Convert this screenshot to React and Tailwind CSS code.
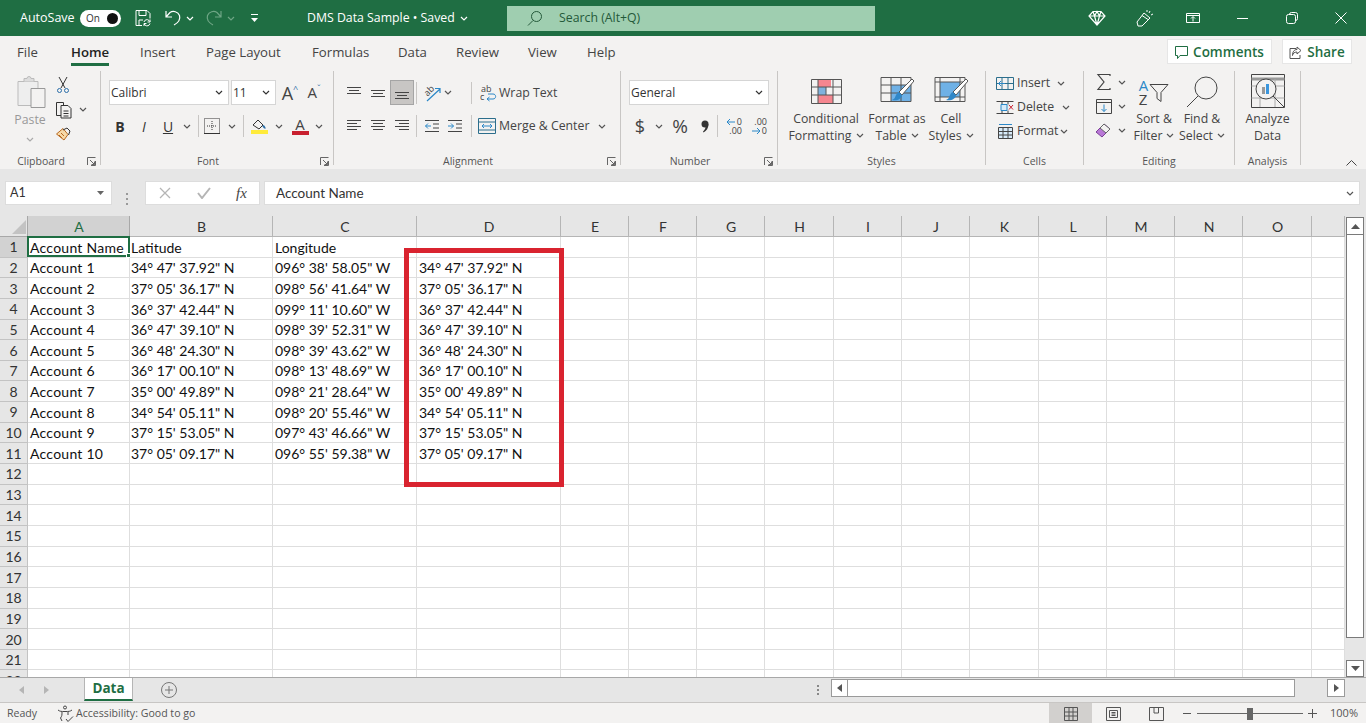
// Excel window: title bar, ribbon, formula bar, sheet grid and status bar
import { Fragment } from 'react'

const UI = { fontFamily: '"Open Sans", "Noto Sans", sans-serif' }
const SHEET = { fontFamily: 'Lato, "Noto Sans", sans-serif' }

const COLS = ['A', 'B', 'C', 'D', 'E', 'F', 'G', 'H', 'I', 'J', 'K', 'L', 'M', 'N', 'O', '']
const LAT = [`34° 47' 37.92" N`, `37° 05' 36.17" N`, `36° 37' 42.44" N`, `36° 47' 39.10" N`, `36° 48' 24.30" N`, `36° 17' 00.10" N`, `35° 00' 49.89" N`, `34° 54' 05.11" N`, `37° 15' 53.05" N`, `37° 05' 09.17" N`]
const LNG = [`096° 38' 58.05" W`, `098° 56' 41.64" W`, `099° 11' 10.60" W`, `098° 39' 52.31" W`, `098° 39' 43.62" W`, `098° 13' 48.69" W`, `098° 21' 28.64" W`, `098° 20' 55.46" W`, `097° 43' 46.66" W`, `096° 55' 59.38" W`]

const rows = [['Account Name', 'Latitude', 'Longitude', '']]
LAT.forEach((lat, i) => rows.push([`Account ${i + 1}`, lat, LNG[i], lat]))
while (rows.length < 22) rows.push(['', '', '', ''])

const Chev = ({ color = '#555' }) => (
  <svg width="8" height="5" viewBox="0 0 8 5" fill="none" stroke={color} strokeWidth="1.2" className="shrink-0"><path d="M1 1l3 3 3-3" /></svg>
)

const Ic = ({ w = 18, h = 18, children, sw = 1, color = '#444' }) => (
  <svg width={w} height={h} viewBox={`0 0 ${w} ${h}`} fill="none" stroke={color} strokeWidth={sw} className="shrink-0">{children}</svg>
)

const Slot = ({ className = '', children }) => (
  <div className={`flex items-center justify-center shrink-0 h-full ${className}`}>{children}</div>
)

const Sep = () => <div className="w-px h-[22px] bg-[#c8c6c4] shrink-0" />

const Launcher = () => (
  <svg width="9" height="9" viewBox="0 0 9 9" fill="none" stroke="#666"><path d="M.5 8V.5H8.500M8.500 4v4.500H4M3 3l4.500 4.500M7.500 4.500v3h-3" /></svg>
)

const Group = ({ label, launcher, className = '', children }) => (
  <div className={`flex flex-col shrink-0 h-[94px] border-r border-[#c8c6c4] ${className}`}>
    <div className="h-[77px] min-h-0 flex-1">{children}</div>
    <div className="h-[17px] pt-[9px] flex items-center text-[10.500px] text-[#555]">
      <div className="flex-1 text-center leading-none">{label}</div>
      {launcher && <div className="w-[18px] flex justify-center"><Launcher /></div>}
    </div>
  </div>
)

const Combo = ({ className = '', children }) => (
  <div className={`h-[25px] bg-white border border-[#d5d5d5] flex items-center justify-between pl-[1px] pr-[5px] text-[12px] text-[#333] shrink-0 ${className}`}>
    <span className="mt-[1px]">{children}</span><Chev color="#333" />
  </div>
)

const Lines = ({ pattern }) => (
  <Ic w={16} h={14}>
    {pattern.map(([y, x1, x2], i) => <path key={i} d={`M${x1} ${y}H${x2}`} />)}
  </Ic>
)

const BigTool = ({ className = '', icon, l1, l2, chev = true }) => (
  <div className={`flex flex-col items-center shrink-0 ${className}`}>
    <div className="h-[33px] mt-[4px] flex items-center justify-center">{icon}</div>
    <div className="mt-[2px] text-[12.300px] leading-[17px] text-[#444] text-center whitespace-nowrap">{l1}</div>
    <div className="text-[12.300px] leading-[17px] text-[#444] text-center whitespace-nowrap flex items-center gap-[4px]">{l2}{chev && <Chev />}</div>
  </div>
)

const Brush = ({ x = 0, y = 0 }) => (
  <g transform={`translate(${x} ${y})`}>
    <path d="M32 2l2 2-12 14-3-3z" fill="#fff" stroke="#555" />
    <path d="M19 15l3 3c0 4-5 6-10 5 3-1 3-3 4-5 1-2 2-3 3-3z" fill="#2f87c8" stroke="none" />
  </g>
)

function TitleBar() {
  return (
    <div className="h-[36px] bg-[#1f6e43] flex items-center text-white text-[12.300px] shrink-0">
      <span className="ml-[20px] w-[60px] text-[12.500px]">AutoSave</span>
      <div className="w-[41px] h-[17px] bg-white rounded-full flex items-center justify-between pl-[6px] pr-[3px]">
        <span className="text-[10px] text-[#333] leading-none">On</span>
        <span className="w-[11px] h-[11px] rounded-full bg-[#111]" />
      </div>
      <Slot className="w-[44px]">
        <Ic w={18} h={18} color="#fff"><path d="M2 1.500h11l3 3v5M2 1.500v15h6M5 1.500v5h7v-5M5 16v-5h4" /><path d="M10 13a3 3 0 0 1 5-1.500l1 1M16 14.500a3 3 0 0 1-5 1.500l-1-1M16 10.500v2.500h-2.500M10 17v-2.500h2.500" /></Ic>
      </Slot>
      <Slot className="w-[24px] -ml-[4px]">
        <Ic w={18} h={18} color="#fff" sw={1.200}><path d="M2 2v6h6M2 8l4-4.500c3-2 8-1 9.500 3 1 3.500-1 7-5.500 9.500" /></Ic>
      </Slot>
      <Slot className="w-[10px]"><Chev color="#fff" /></Slot>
      <Slot className="w-[24px] ml-[7px]">
        <Ic w={18} h={18} color="#6ea585" sw={1.200}><path d="M16 2v6h-6M16 8l-4-4.500c-3-2-8-1-9.500 3-1 3.500 1 7 5.500 9.500" /></Ic>
      </Slot>
      <Slot className="w-[10px]"><Chev color="#6ea585" /></Slot>
      <Slot className="w-[18px] ml-[9px]">
        <svg width="9" height="9" viewBox="0 0 9 9" fill="#fff" stroke="#fff"><path d="M1 .5h7" /><path d="M1 4h7L4.500 8z" stroke="none" /></svg>
      </Slot>
      <span className="ml-[44px] w-[147px] whitespace-nowrap">DMS Data Sample • Saved</span>
      <Slot className="w-[20px]"><Chev color="#fff" /></Slot>
      <div className="ml-[33px] w-[368px] h-[25px] bg-[#9fceb0] flex items-center text-[#24593a]">
        <Slot className="w-[56px] -mr-[4px]">
          <Ic w={16} h={16} color="#24593a"><circle cx="9.500" cy="6.500" r="5" /><path d="M6 10.500L1 15.500" /></Ic>
        </Slot>
        <span>Search (Alt+Q)</span>
      </div>
      <div className="flex-1" />
      <Slot className="w-[49px]">
        <Ic w={18} h={16} color="#fff" sw={1.200}><path d="M5 1.500h8l4 4.500-8 9-8-9zM1 6h16M6.500 6L9 15l2.500-9M5 1.500L6.500 6 9 1.500 11.500 6l1.500-4.500" /></Ic>
      </Slot>
      <Slot className="w-[48px]">
        <Ic w={18} h={18} color="#fff"><path d="M1 13l7-9 6 5-8 8-4 0zM6 6.500l6 4M13 4l1-2M15 6l2-1M11 3l0-2" /></Ic>
      </Slot>
      <Slot className="w-[48px]">
        <Ic w={16} h={12} color="#fff"><path d="M1.500 1.500h13v9h-13zM1.500 3.500h13M8 9.500V5M6 6.500L8 4.500l2 2" /></Ic>
      </Slot>
      <Slot className="w-[50px]"><div className="w-[11px] h-px bg-white" /></Slot>
      <Slot className="w-[49px]">
        <Ic w={12} h={12} color="#fff"><path d="M3.500 2.500a2 2 0 0 1 2-2h4a2 2 0 0 1 2 2v4a2 2 0 0 1-2 2" /><rect x=".5" y="2.500" width="9" height="9" rx="2" /></Ic>
      </Slot>
      <Slot className="w-[50px]">
        <Ic w={12} h={12} color="#fff"><path d="M.5.5l11 11M11.500.5l-11 11" /></Ic>
      </Slot>
    </div>
  )
}

function TabRow() {
  const tabs = [['File', 'w-[71px] pl-[17px]'], ['Home', 'w-[69px]'], ['Insert', 'w-[66px]'], ['Page Layout', 'w-[106px]'], ['Formulas', 'w-[86px]'], ['Data', 'w-[58px]'], ['Review', 'w-[72px]'], ['View', 'w-[59px]'], ['Help', 'w-[50px]']]
  return (
    <div className="h-[34px] bg-[#f3f2f1] flex text-[13.200px] text-[#444] shrink-0">
      {tabs.map(([t, w]) => (
        <div key={t} className={`${w} shrink-0 flex flex-col pt-[6px]`}>
          <span className={t === 'Home' ? 'w-fit text-[#222] font-semibold leading-[20px] border-b-[3px] border-[#1f6e43] pb-[1px]' : 'leading-[20px]'}>{t}</span>
        </div>
      ))}
      <div className="flex-1" />
      <div className="mt-[3px] h-[25px] w-[105px] bg-white border border-[#e6e6e6] flex items-center justify-center gap-[5px] pt-[1px] text-[#1f6e43] font-semibold text-[13.500px]">
        <Ic w={13} h={13} color="#1f6e43"><path d="M.5.5h12v9H5l-2.500 3v-3h-2z" /></Ic>Comments
      </div>
      <div className="mt-[3px] ml-[10px] mr-[14px] h-[25px] w-[70px] bg-white border border-[#e6e6e6] flex items-center justify-center gap-[5px] pt-[1px] text-[#1f6e43] font-semibold text-[13.500px]">
        <Ic w={13} h={13} color="#555"><path d="M7 2.500H1v10h10V9M8 1l4 3.500L8 8V6C5 6 4 7.500 3.500 9.500 3.500 6 5 3.500 8 3.500z" /></Ic>Share
      </div>
    </div>
  )
}

function Clipboard() {
  return (
    <Group label="Clipboard" launcher className="w-[101px]">
      <div className="flex h-full">
        <div className="w-[55px] flex flex-col items-center pl-[5px] text-[12.300px] text-[#999]">
          <div className="mt-[5px] h-[33px]">
            <Ic w={31} h={33} color="#bbb"><path d="M3 5.500h20v24H3z" fill="#eee" /><path d="M9 5.500v-3h3a2 2 0 0 1 4 0h3v3" fill="#ddd" /><path d="M16 12.500h14v19H16z" fill="#f3f2f1" stroke="#999" /></Ic>
          </div>
          <span className="mt-[2px] leading-[17px]">Paste</span>
          <div className="mt-[9px]"><Chev color="#aaa" /></div>
        </div>
        <div className="flex flex-col pt-[2px]">
          <div className="h-[24px] flex items-center pl-[1px]">
            <Ic w={14} h={18} color="#333"><path d="M3 1l6 11M11 1L5 12" /><circle cx="3.500" cy="14.500" r="2" stroke="#2b6ea8" /><circle cx="10.500" cy="14.500" r="2" stroke="#2b6ea8" /></Ic>
          </div>
          <div className="h-[25px] flex items-center gap-[6px]">
            <Ic w={18} h={18} color="#333"><path d="M1.500 1.500h7v13h-7z" /><path d="M6 4.500h7l3 3v9.500H6z" fill="#f3f2f1" /><path d="M8.500 10h5M8.500 12.500h5M8.500 15h5" /></Ic>
            <Chev />
          </div>
          <div className="h-[24px] flex items-center">
            <Ic w={18} h={16} color="#b8681f"><path d="M1.500 8L8 2.500l5 6-4 5.500z" fill="#f7d9a8" /><path d="M8 4l4-2 3 3-1.500 4" stroke="#333" /><path d="M4 9l3 3M6 7l3 3" /></Ic>
          </div>
        </div>
      </div>
    </Group>
  )
}

function Font() {
  return (
    <Group label="Font" launcher className="w-[233px]">
      <div className="flex flex-col pt-[9px]">
        <div className="h-[25px] flex items-center pl-[8px]">
          <Combo className="w-[120px]">Calibri</Combo>
          <Combo className="w-[45px] ml-[2px]">11</Combo>
          <Slot className="w-[28px] text-[18px] text-[#444]"><span className="leading-none">A</span><span className="text-[9px] leading-none text-[#2b6ea8] -mt-[8px]">^</span></Slot>
          <Slot className="w-[20px] text-[15px] text-[#444]"><span className="leading-none">A</span><span className="text-[9px] leading-none text-[#2b6ea8] -mt-[8px]">ˇ</span></Slot>
        </div>
        <div className="h-[24px] mt-[9px] flex items-center pl-[7px] text-[14px] text-[#333]">
          <Slot className="w-[24px] font-bold" >B</Slot>
          <Slot className="w-[24px] italic">I</Slot>
          <Slot className="w-[24px] underline">U</Slot>
          <Slot className="w-[14px]"><Chev /></Slot>
          <Slot className="w-[9px]"><Sep /></Slot>
          <Slot className="w-[18px]">
            <Ic w={16} h={16} color="#333"><path d="M.5.500h15v15H.5z" strokeDasharray="1 1" /><path d="M8 3v10M3 8h10" strokeDasharray="1 1" /><path d="M0 15.500h16" /></Ic>
          </Slot>
          <Slot className="w-[22px]"><Chev /></Slot>
          <Sep />
          <Slot className="w-[26px] ml-[2px]">
            <div className="flex flex-col items-center">
              <Ic w={16} h={12} color="#333"><path d="M2 7l5-5 5 5-4 4z" /><path d="M12 7.500c1 1.500 2 2 1.500 3" stroke="#2b6ea8" strokeWidth="2" /></Ic>
              <div className="w-[17px] h-[4px] bg-[#ffeb3b]" />
            </div>
          </Slot>
          <Slot className="w-[14px]"><Chev /></Slot>
          <Slot className="w-[28px]">
            <div className="flex flex-col items-center leading-none text-[15px] text-[#444]"><span className="leading-[13px]">A</span><div className="w-[17px] h-[4px] bg-[#c8202f]" /></div>
          </Slot>
          <Slot className="w-[10px]"><Chev /></Slot>
        </div>
      </div>
    </Group>
  )
}

function Alignment() {
  const selected = 'bg-[#c8c6c4] border border-[#a5a5a5]'
  return (
    <Group label="Alignment" launcher className="w-[287px]">
      <div className="flex flex-col pt-[9px]">
        <div className="h-[25px] flex items-center pl-[8px]">
          <Slot className="w-[24px]"><Lines pattern={[[1.500, 1, 15], [4.500, 3, 13], [7.500, 1, 15]]} /></Slot>
          <Slot className="w-[24px]"><Lines pattern={[[4.500, 1, 15], [7.500, 3, 13], [10.500, 1, 15]]} /></Slot>
          <Slot className={`w-[24px] ${selected}`}><Lines pattern={[[6.500, 1, 15], [9.500, 3, 13], [12.500, 1, 15]]} /></Slot>
          <Slot className="w-[6px] justify-start pl-[2px]"><Sep /></Slot>
          <Slot className="w-[24px]">
            <svg width="20" height="20" viewBox="0 0 20 20" fill="none" stroke="#2b88c8" strokeWidth="1.200">
              <text x="2" y="11" fontSize="9" fill="#444" stroke="none" transform="rotate(-45 7 8)">ab</text>
              <path d="M5 18L18 6M13 5.500h5V10" />
            </svg>
          </Slot>
          <Slot className="w-[8px]"><Chev /></Slot>
          <div className="w-[19px]" />
          <Sep />
          <div className="w-[8px]" />
          <svg width="17" height="20" viewBox="0 0 17 20" fill="none" stroke="#2b88c8" className="shrink-0">
            <text x="1" y="9" fontSize="9" fill="#444" stroke="none">ab</text>
            <text x="0" y="17" fontSize="9" fill="#444" stroke="none">c</text>
            <path d="M7 16h6c3.500 0 3.500-5 0-5H8M9.500 14L7 16l2.500 2" />
          </svg>
          <span className="ml-[2px] mt-[2px] text-[12.300px] text-[#444]">Wrap Text</span>
        </div>
        <div className="h-[24px] mt-[9px] flex items-center pl-[8px]">
          <Slot className="w-[24px]"><Lines pattern={[[1.500, 1, 15], [4.500, 1, 11], [7.500, 1, 15], [10.500, 1, 11]]} /></Slot>
          <Slot className="w-[24px]"><Lines pattern={[[1.500, 1, 15], [4.500, 3, 13], [7.500, 1, 15], [10.500, 3, 13]]} /></Slot>
          <Slot className="w-[24px]"><Lines pattern={[[1.500, 1, 15], [4.500, 5, 15], [7.500, 1, 15], [10.500, 5, 15]]} /></Slot>
          <Slot className="w-[6px] justify-start pl-[2px]"><Sep /></Slot>
          <Slot className="w-[23px]">
            <Ic w={16} h={14} color="#444"><path d="M1 1.500h14M1 12.500h14M9 5h6M9 9h6" /><path d="M7 7H1.500M4 4.500L1.500 7 4 9.500" stroke="#2b88c8" /></Ic>
          </Slot>
          <Slot className="w-[24px]">
            <Ic w={16} h={14} color="#444"><path d="M1 1.500h14M1 12.500h14M9 5h6M9 9h6" /><path d="M1 7h5.500M4 4.500L6.500 7 4 9.500" stroke="#2b88c8" /></Ic>
          </Slot>
          <div className="w-[4px]" />
          <Sep />
          <Slot className="w-[24px] pl-[6px]">
            <Ic w={18} h={16} color="#2b6e8c"><path d="M.5.5h17v15H.5zM.5 4h17M.5 12h17" /><path d="M4 8h10M6 6L4 8l2 2M12 6l2 2-2 2" stroke="#2b88c8" fill="none" /></Ic>
          </Slot>
          <span className="ml-[3px] w-[90px] text-[12.300px] text-[#444] whitespace-nowrap">Merge &amp; Center</span>
          <Slot className="w-[26px]"><Chev /></Slot>
        </div>
      </div>
    </Group>
  )
}

const Decimal = ({ top, bottom, topRight, arrow }) => (
  <div className="flex flex-col text-[9px] leading-[9px] text-[#444] w-[22px] items-end">
    <div className="flex items-center justify-end h-[9px] w-[22px]">
      {topRight && arrow}
      <span>{top}</span>
    </div>
    <div className="flex items-center justify-end h-[9px] w-[22px]">
      {!topRight && arrow}
      <span>{bottom}</span>
    </div>
  </div>
)

function NumberGroup() {
  return (
    <Group label="Number" launcher className="w-[157px]">
      <div className="flex flex-col pt-[9px] pl-[8px]">
        <Combo className="w-[140px]">General</Combo>
        <div className="h-[24px] mt-[9px] flex items-center text-[#444]">
          <Slot className="w-[22px] text-[18px]">$</Slot>
          <Slot className="w-[16px]"><Chev /></Slot>
          <Slot className="w-[26px] text-[19px]">%</Slot>
          <Slot className="w-[24px]">
            <svg width="8" height="13" viewBox="0 0 8 13" fill="#333"><circle cx="4" cy="4" r="3.500" /><path d="M7.500 4c0 4-2 7-5 8.500L2 11.500C3.500 10 4.500 8.500 4.500 7z" /></svg>
          </Slot>
          <Sep />
          <Slot className="w-[26px]">
            <Decimal top="0" bottom=".00" topRight arrow={<svg width="10" height="8" viewBox="0 0 10 8" fill="none" stroke="#2b88c8" className="mr-[1px]"><path d="M9 4H1M4 1L1 4l3 3" /></svg>} />
          </Slot>
          <Slot className="w-[24px]">
            <Decimal top=".00" bottom="0" arrow={<svg width="10" height="8" viewBox="0 0 10 8" fill="none" stroke="#2b88c8" className="mr-[1px]"><path d="M1 4h8M6 1l3 3-3 3" /></svg>} />
          </Slot>
        </div>
      </div>
    </Group>
  )
}

function Styles() {
  return (
    <Group label="Styles" className="w-[208px]">
      <div className="flex pl-[8px]">
        <BigTool className="w-[80px]" l1="Conditional" l2="Formatting" icon={
          <Ic w={31} h={25} color="#555">
            <path d="M7 1h13v7H7zM7 16h15v8H7z" fill="#f5868f" stroke="none" />
            <path d="M7 8h8v8H7z" fill="#7fb2dd" stroke="none" />
            <path d="M.5.5h30v24H.5zM.5 8h30M.5 16h30M7 .5v24M15 8v8M22 .5v24" />
          </Ic>
        } />
        <BigTool className="w-[62px]" l1="Format as" l2="Table" icon={
          <Ic w={34} h={30} color="#555">
            <path d="M11 8h20v16H11z" fill="#6fb1e6" stroke="none" />
            <path d="M1 .5h30v24H1zM1 8h30M1 16h30M11 .5v24M21 .5v24" />
            <Brush />
          </Ic>
        } />
        <BigTool className="w-[46px]" l1="Cell" l2="Styles" icon={
          <Ic w={34} h={30} color="#555">
            <path d="M6 5h20v15H6z" fill="#6fb1e6" stroke="none" />
            <path d="M1 .5h30v24H1zM1 5h30M1 20h30M6 .5v24M26 .5v24" />
            <Brush />
          </Ic>
        } />
      </div>
    </Group>
  )
}

function Cells() {
  const row = 'h-[24px] flex items-center pl-[10px] text-[12.300px] text-[#444]'
  return (
    <Group label="Cells" className="w-[98px]">
      <div className={row}>
        <Ic w={18} h={15} color="#2b6e8c"><path d="M.5 1.500h17v12H.5zM.5 7.500h17M6 1.500v12M12 1.500v12" /><path d="M9 7.500H3M5 5L2.500 7.500 5 10" stroke="#2b88c8" /></Ic>
        <span className="ml-[3px] w-[40px]">Insert</span><Chev />
      </div>
      <div className={row}>
        <Ic w={18} h={15} color="#444"><path d="M.5 1.500h17M.5 13.500h17M6 1.500v3M12 1.500v3M6 10.500v3M12 10.500v3" /><path d="M5 4.500h6v6H5z" stroke="#2b88c8" fill="#d7ebf9" /><path d="M13 5l4 4.500M17 5l-4 4.500" stroke="#c8202f" /></Ic>
        <span className="ml-[3px] w-[45px]">Delete</span><Chev />
      </div>
      <div className={row}>
        <Ic w={18} h={16} color="#444"><path d="M2.500 4.500h14v11h-14z" fill="#d7ebf9" /><path d="M2.500 8.500h14M2.500 12h14M7 4.500v11M12 4.500v11" /><path d="M3 1.500h13" stroke="#2b88c8" /></Ic>
        <span className="ml-[3px] w-[43px]">Format</span><Chev />
      </div>
    </Group>
  )
}

function Editing() {
  const row = 'h-[24px] flex items-center pl-[10px] gap-[4px]'
  return (
    <Group label="Editing" className="w-[151px]">
      <div className="flex">
        <div className="w-[44px] flex flex-col -mt-[1px] shrink-0">
          <div className={row}><Ic w={20} h={18} color="#444" sw={1.200}><path d="M16 3V1.500H4L10 9l-6 7.500h12V15" /></Ic><Chev /></div>
          <div className={row}><Ic w={20} h={18} color="#444"><path d="M2.500 2.500h15v14h-15zM2.500 5.500h15" /><path d="M10 7.500v7M7.500 12l2.500 2.500 2.500-2.500" stroke="#2b88c8" /></Ic><Chev /></div>
          <div className={row}><Ic w={20} h={18} color="#7b3f98"><path d="M2 11L10 3l6 5-8 8z" fill="#b979d6" /><path d="M10 3l6 5-4 4-6-5z" fill="#f3f2f1" stroke="#666" /></Ic><Chev /></div>
        </div>
        <BigTool className="w-[52px]" l1="Sort &amp;" l2="Filter" icon={
          <div className="flex items-center gap-[1px]">
            <div className="flex flex-col text-[15px] leading-[14px] text-[#444]">
              <span className="text-[#2b88c8]">A</span>
              <span>Z</span>
            </div>
            <Ic w={20} h={22} color="#444"><path d="M1 3.500h18l-7 8v9l-4-3v-6z" /></Ic>
          </div>
        } />
        <BigTool className="w-[44px]" l1="Find &amp;" l2="Select" icon={
          <Ic w={34} h={32} color="#444"><circle cx="21" cy="12" r="11" /><path d="M13 20L2 31" /></Ic>
        } />
      </div>
    </Group>
  )
}

function Analysis() {
  return (
    <Group label="Analysis" className="w-[66px]">
      <BigTool className="w-full" chev={false} l1="Analyze" l2="Data" icon={
        <Ic w={34} h={35} color="#444"><path d="M.5.5h33v33H.5z" /><path d="M.5 5h33" strokeWidth="3" stroke="#999" /><path d="M.5 12h33M.5 24h33M9 5v28M24 5v28" stroke="#aaa" /><circle cx="15" cy="15" r="10" fill="#f3f2f1" /><path d="M11 13h3v7h-3z" fill="#999" stroke="none" /><path d="M15 10h3v10h-3z" fill="#3a96dd" stroke="none" /><path d="M22 22l11 11" /></Ic>
      } />
    </Group>
  )
}

function Ribbon() {
  return (
    <div className="h-[99px] bg-[#f3f2f1] flex items-start pt-[1px] shrink-0" style={UI}>
      <Clipboard />
      <Font />
      <Alignment />
      <NumberGroup />
      <Styles />
      <Cells />
      <Editing />
      <Analysis />
      <div className="flex-1 h-full flex items-end justify-end pr-[9px] pb-[3px]">
        <svg width="11" height="6" viewBox="0 0 11 6" fill="none" stroke="#444"><path d="M.5 5.500l5-5 5 5" /></svg>
      </div>
    </div>
  )
}

function FormulaBar() {
  return (
    <div className="h-[47px] bg-[#e6e6e6] flex items-start pt-[12px] pl-[5px] pr-[6px] shrink-0" style={UI}>
      <div className="w-[107px] h-[24px] bg-white border border-[#ddd] flex items-center justify-between pl-[4px] pr-[7px] text-[12.500px] text-[#333]" style={SHEET}>
        A1
        <svg width="7" height="4" viewBox="0 0 7 4" fill="#666"><path d="M0 0h7L3.500 4z" /></svg>
      </div>
      <Slot className="w-[33px] h-[24px] flex-col gap-[3px] pr-[3px]">
        <span className="w-[2px] h-[2px] bg-[#999]" /><span className="w-[2px] h-[2px] bg-[#999]" /><span className="w-[2px] h-[2px] bg-[#999]" />
      </Slot>
      <div className="w-[115px] h-[24px] bg-white border border-[#ddd] flex items-center shrink-0">
        <Slot className="w-[38px]"><Ic w={12} h={12} color="#b5b5b5" sw={1.300}><path d="M1 1l10 10M11 1L1 11" /></Ic></Slot>
        <Slot className="w-[40px]"><Ic w={14} h={12} color="#b5b5b5" sw={2}><path d="M1 6l4 5 8-10" /></Ic></Slot>
        <Slot className="w-[35px] italic text-[15px] text-[#444]"><span style={{ fontFamily: '"Liberation Serif", serif' }}>fx</span></Slot>
      </div>
      <div className="flex-1 ml-[4px] h-[24px] bg-white border border-[#ddd] flex items-center justify-between pl-[11px] pr-[5px] text-[13.500px] text-[#333]" style={SHEET}>
        Account Name
        <Chev color="#555" />
      </div>
    </div>
  )
}

function Sheet() {
  return (
    <div className="relative h-[461px] flex-1 overflow-hidden bg-white" style={SHEET}>
      <div className="grid grid-cols-[28px_102px_143px_144px_144px_68px_68px_68px_69px_68px_68px_69px_68px_68px_68px_69px_33px] grid-rows-[21px] auto-rows-[20.650px] text-[14px] text-[#111]">
        <div className="bg-[#e6e6e6] border-r border-b border-[#a8a8a8] flex items-end justify-end">
          <svg width="14" height="14" viewBox="0 0 14 14" fill="#c3c3c3" className="mb-[2px] mr-[1px]"><path d="M14 0v14H0z" /></svg>
        </div>
        {COLS.map((c, i) => (
          <div key={i} className={`border-r border-b flex items-center justify-center pl-[1px] text-[14px] ${i === 0 ? 'bg-[#d2d2d2] border-b-[#1f6e43] border-r-[#a8a8a8] text-[#1f6e43]' : 'bg-[#e6e6e6] border-[#b5b5b5] text-[#333]'}`}>{c}</div>
        ))}
        {rows.map((r, i) => (
          <Fragment key={i}>
            <div className={`border-r border-b border-[#c3c3c3] flex items-center justify-center text-[14px] text-[#333] ${i === 0 ? 'bg-[#d2d2d2]' : 'bg-[#e6e6e6]'}`}>{i + 1}</div>
            {COLS.map((_, j) => (
              <div key={j} className={`relative border-r border-b border-[#dedede] pt-[0.5px] flex items-center whitespace-nowrap ${j === 1 ? 'pl-[1px]' : 'pl-[2px]'} ${j === 0 ? 'tracking-[0.25px]' : ''}`}>
                {r[j] || ''}
                {i === 0 && j === 0 && (
                  <div className="absolute -inset-x-[1px] top-[-1px] bottom-0 border-2 border-[#1f6e43]">
                    <div className="absolute -right-[3px] -bottom-[3px] w-[5px] h-[5px] bg-[#1f6e43] border border-white" />
                  </div>
                )}
              </div>
            ))}
          </Fragment>
        ))}
      </div>
      <div className="absolute left-[404px] top-[32px] w-[160px] h-[239px] border-[5px] border-[#d9232f]" />
    </div>
  )
}

function VScroll() {
  return (
    <div className="w-[21px] bg-[#e6e6e6] flex flex-col items-stretch pl-[1px] pr-[2px] shrink-0 h-[461px]">
      <div className="h-[18px] mt-[1px] bg-white border border-[#7a7a7a] flex items-center justify-center">
        <svg width="9" height="5" viewBox="0 0 9 5" fill="#555"><path d="M4.500 0L9 5H0z" /></svg>
      </div>
      <div className="h-[403px] bg-white border-x border-b border-[#7a7a7a]" />
      <div className="flex-1" />
      <div className="h-[17px] bg-white border border-[#7a7a7a] flex items-center justify-center">
        <svg width="9" height="5" viewBox="0 0 9 5" fill="#555"><path d="M4.500 5L9 0H0z" /></svg>
      </div>
    </div>
  )
}

function SheetTabs() {
  return (
    <div className="h-[25px] bg-[#e6e6e6] border-t border-[#a8a8a8] flex items-start shrink-0" style={UI}>
      <Slot className="w-[34px] h-[24px]"><svg width="5" height="8" viewBox="0 0 5 8" fill="#b5b5b5" className="ml-[8px]"><path d="M5 0v8L0 4z" /></svg></Slot>
      <Slot className="w-[24px] h-[24px]"><svg width="5" height="8" viewBox="0 0 5 8" fill="#b5b5b5"><path d="M0 0v8l5-4z" /></svg></Slot>
      <div className="ml-[26px] w-[49px] h-[23px] bg-white border-x border-b-2 border-[#b5b5b5] border-b-[#1f6e43] flex items-center justify-center pb-[1px] text-[#1f6e43] font-bold text-[13.500px]">Data</div>
      <Slot className="w-[72px] h-[23px]">
        <Ic w={16} h={16} color="#777"><circle cx="8" cy="8" r="7.500" /><path d="M8 4v8M4 8h8" /></Ic>
      </Slot>
      <div className="w-[606px]" />
      <Slot className="w-[14px] h-[23px] flex-col gap-[2px]">
        <span className="w-[2px] h-[2px] bg-[#888]" /><span className="w-[2px] h-[2px] bg-[#888]" /><span className="w-[2px] h-[2px] bg-[#888]" />
      </Slot>
      <div className="ml-[6px] mt-[1px] h-[18px] flex">
        <div className="w-[17px] bg-white border border-[#9a9a9a] flex items-center justify-center">
          <svg width="5" height="8" viewBox="0 0 5 8" fill="#555"><path d="M5 0v8L0 4z" /></svg>
        </div>
        <div className="w-[447px] bg-white border-y border-r border-[#9a9a9a]" />
        <div className="w-[32px]" />
        <div className="w-[18px] bg-white border border-[#9a9a9a] flex items-center justify-center">
          <svg width="5" height="8" viewBox="0 0 5 8" fill="#555"><path d="M0 0v8l5-4z" /></svg>
        </div>
      </div>
    </div>
  )
}

function StatusBar() {
  return (
    <div className="h-[22px] bg-[#f3f2f1] border-t border-[#c8c6c4] flex items-center text-[10.600px] text-[#555] shrink-0" style={UI}>
      <span className="ml-[7px] w-[50px]">Ready</span>
      <Ic w={18} h={18} color="#444"><circle cx="8" cy="2.500" r="1.500" /><path d="M1 5c2 1.500 3 1.500 7 1.500S13 6.500 15 5M5 7c0 3 0 4-1.500 6l1.500 3M11 7v3M9 14l2 2.500 5-5" /></Ic>
      <span className="ml-[1px]">Accessibility: Good to go</span>
      <div className="flex-1" />
      <Slot className="w-[43px] bg-[#d2d0ce]">
        <Ic w={14} h={14} color="#555"><path d="M.5.5h13v13H.5zM.5 5h13M.5 9h13M5 .5v13M9 .5v13" /></Ic>
      </Slot>
      <Slot className="w-[43px]">
        <Ic w={15} h={14} color="#555"><path d="M.5.5h14v13H.5zM3.500 3.500h8v7h-8zM5.500 5.500h4M5.500 7h4M5.500 8.500h4" /></Ic>
      </Slot>
      <Slot className="w-[43px]">
        <Ic w={15} h={14} color="#555"><path d="M.5.5h14v13H.5zM5 .5V6h4.500V.5" /></Ic>
      </Slot>
      <Slot className="w-[18px]"><div className="w-[8px] h-px bg-[#555]" /></Slot>
      <div className="ml-[1px] w-[106px] h-px bg-[#666] flex items-center justify-center shrink-0">
        <div className="w-[6px] h-[12px] bg-[#666] shrink-0" />
      </div>
      <Slot className="w-[18px]"><Ic w={9} h={9} color="#555"><path d="M0 4.500h9M4.500 0v9" /></Ic></Slot>
      <span className="ml-[9px] mr-[8px] text-[11px]">100%</span>
    </div>
  )
}

export default function App() {
  return (
    <div className="w-[1366px] h-[723px] overflow-hidden flex flex-col bg-[#e6e6e6]" style={UI}>
      <TitleBar />
      <TabRow />
      <Ribbon />
      <FormulaBar />
      <div className="flex">
        <Sheet />
        <VScroll />
      </div>
      <SheetTabs />
      <StatusBar />
    </div>
  )
}
